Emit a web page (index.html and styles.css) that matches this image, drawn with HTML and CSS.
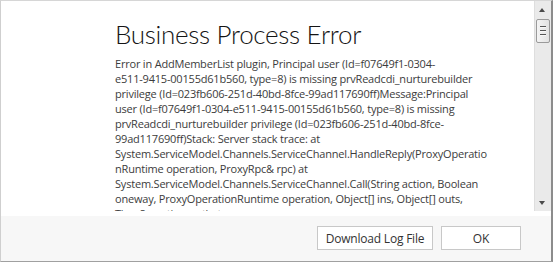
FILE: index.html
```html
<!DOCTYPE html>
<html lang="en">
<head>
  <meta charset="UTF-8">
  <meta name="viewport" content="width=device-width, initial-scale=1.0">
  <title>Business Process Error</title>
  <link rel="stylesheet" href="styles.css">
</head>
<body>
  <div class="dialog">
    <div class="content">
      <div class="message">
        <h1>Business Process Error</h1>
        <p class="details">Error in AddMemberList plugin, Principal user (Id=f07649f1-0304-<br>e511-9415-00155d61b560, type=8) is missing prvReadcdi_nurturebuilder<br>privilege (Id=023fb606-251d-40bd-8fce-99ad117690ff)Message:Principal<br>user (Id=f07649f1-0304-e511-9415-00155d61b560, type=8) is missing<br>prvReadcdi_nurturebuilder privilege (Id=023fb606-251d-40bd-8fce-<br>99ad117690ff)Stack: Server stack trace: at<br>System.ServiceModel.Channels.ServiceChannel.HandleReply(ProxyOperatio<br>nRuntime operation, ProxyRpc&amp; rpc) at<br>System.ServiceModel.Channels.ServiceChannel.Call(String action, Boolean<br>oneway, ProxyOperationRuntime operation, Object[] ins, Object[] outs,<br>TimeSpan timeout) at</p>
      </div>
      <div class="scrollbar">
        <div class="arrow up"></div>
        <div class="track">
          <div class="thumb">
            <span></span><span></span><span></span>
          </div>
        </div>
        <div class="arrow down"></div>
      </div>
    </div>
    <div class="spacer"></div>
    <div class="footer">
      <button class="btn btn-log">Download Log File</button>
      <button class="btn btn-ok">OK</button>
    </div>
  </div>
</body>
</html>
```

FILE: styles.css
```css
body {
  margin: 0;
  padding: 0;
  background: #fff;
  font-family: 'Open Sans', 'Noto Sans', sans-serif;
}

.dialog {
  width: 553px;
  height: 262px;
  box-sizing: border-box;
  border-top: 1px solid #d6d6d6;
  border-left: 1px solid #cfcfcf;
  border-right: 2px solid #8c8c8c;
  border-bottom: 1px solid #a0a0a0;
  display: flex;
  flex-direction: column;
  background: #fff;
}

.content {
  height: 210px;
  display: flex;
  flex-shrink: 0;
}

.message {
  flex: 1;
  overflow: hidden;
  padding-left: 114px;
}

h1 {
  margin: 16px 0 5px;
  font-family: Lato, 'Open Sans', sans-serif;
  font-size: 26px;
  font-weight: 300;
  line-height: 34px;
  letter-spacing: -0.3px;
  color: #141414;
  white-space: nowrap;
}

.details {
  margin: 0;
  font-size: 11px;
  line-height: 15px;
  letter-spacing: -0.2px;
  color: #3c3c3c;
  white-space: nowrap;
}

.scrollbar {
  width: 16px;
  background: #eaeaea;
  border-left: 1px solid #dedede;
  display: flex;
  flex-direction: column;
}

.arrow {
  height: 18px;
  position: relative;
}

.arrow::after {
  content: "";
  position: absolute;
  left: 4px;
  border-left: 3.5px solid transparent;
  border-right: 3.5px solid transparent;
}

.arrow.up::after {
  top: 7px;
  border-bottom: 4px solid #4a4a4a;
}

.arrow.down::after {
  top: 8px;
  border-top: 4px solid #4a4a4a;
}

.track {
  flex: 1;
}

.thumb {
  margin: 0 1px;
  height: 22px;
  border: 1px solid #9a9a9a;
  border-radius: 2px;
  background: linear-gradient(to right, #f4f4f4, #e2e2e2);
  display: flex;
  flex-direction: column;
  justify-content: center;
  align-items: center;
  gap: 2px;
}

.thumb span {
  display: block;
  width: 6px;
  height: 1px;
  background: #555;
  border-bottom: 1px solid #f8f8f8;
}

.spacer {
  height: 5px;
  flex-shrink: 0;
}

.footer {
  flex: 1;
  background: #f7f7f7;
  display: flex;
  justify-content: flex-end;
  align-items: flex-start;
  gap: 8px;
  padding: 10px 30px 0 0;
}

.btn {
  height: 24px;
  box-sizing: border-box;
  background: #fff;
  border: 1px solid #c8c8c8;
  font-family: 'Open Sans', 'Noto Sans', sans-serif;
  font-size: 12px;
  letter-spacing: -0.2px;
  color: #333;
  padding: 0;
  cursor: pointer;
}

.btn-log {
  width: 116px;
}

.btn-ok {
  width: 80px;
}
```
